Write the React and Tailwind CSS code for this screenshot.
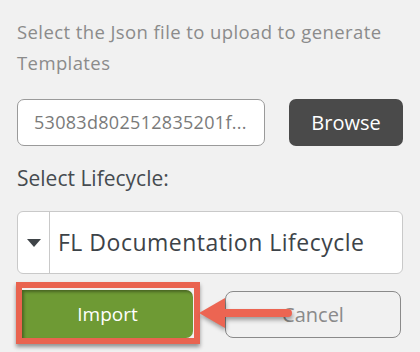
import React from 'react';

const font = { fontFamily: '"Open Sans", Lato, Arial, sans-serif' };

const Caret = () => (
  <svg width="14" height="8" viewBox="0 0 14 8">
    <path d="M0 0 H14 L7 8 Z" fill="#3f4448" />
  </svg>
);

const Arrow = () => (
  <svg
    className="absolute left-[196px] top-[294px] pointer-events-none"
    width="100"
    height="38"
    viewBox="0 0 100 38"
    style={{ filter: 'drop-shadow(1px 3px 2px rgba(0,0,0,0.35))' }}
  >
    <line x1="28" y1="19" x2="92" y2="19" stroke="#ec6552" strokeWidth="8" strokeLinecap="round" />
    <path d="M3 19 L29 4 L29 34 Z" fill="#ec6552" />
  </svg>
);

const App = () => {
  return (
    <div className="relative w-[420px] h-[352px] bg-[#f1f1f1] overflow-hidden" style={font}>
      <div className="px-[17px] pt-[16px]">
        <p className="text-[18.5px] tracking-[0.4px] leading-[31px] text-[#8b8b8b] w-[384px]">
          Select the Json file to upload to generate Templates
        </p>

        <div className="flex items-center mt-[21px]">
          <div className="w-[248px] h-[47px] bg-white border border-[#9a9a9a] rounded-[7px] flex items-center px-[16px]">
            <span className="text-[18px] tracking-[0.3px] text-[#7a7a7a] whitespace-nowrap">53083d802512835201f...</span>
          </div>
          <button className="ml-auto w-[114px] h-[47px] bg-[#4a4a4a] text-white text-[20px] rounded-[7px]">
            Browse
          </button>
        </div>

        <div className="mt-[17px] text-[21px] leading-[30px] text-[#464b50]">Select Lifecycle:</div>

        <div className="mt-[18px] h-[63px] bg-white border border-[#c9c9c9] rounded-[6px] flex items-stretch">
          <div className="w-[32px] flex items-center justify-center border-r border-[#c9c9c9]">
            <Caret />
          </div>
          <div className="flex items-center pl-[8px] text-[23px] tracking-[0.5px] text-[#3d4348] whitespace-nowrap">
            FL Documentation Lifecycle
          </div>
        </div>

        <div className="flex items-start mt-[8px] -ml-px">
          <div className="w-[184px] h-[62px] border-[6px] border-[#e9634f] shadow-[0_3px_4px_rgba(0,0,0,0.4)] flex items-end">
            <button className="w-[171px] h-[48px] bg-[#6e9a34] rounded-r-[7px] text-white text-[19px] shadow-[inset_2px_2px_3px_rgba(0,0,0,0.35)]">
              Import
            </button>
          </div>
          <button className="ml-[25px] mt-[9px] w-[176px] h-[47px] border border-[#8a8a8a] rounded-[8px] text-[20px] text-[#8a8a8a]">
            Cancel
          </button>
        </div>
      </div>
      <Arrow />
    </div>
  );
};

export default App;
